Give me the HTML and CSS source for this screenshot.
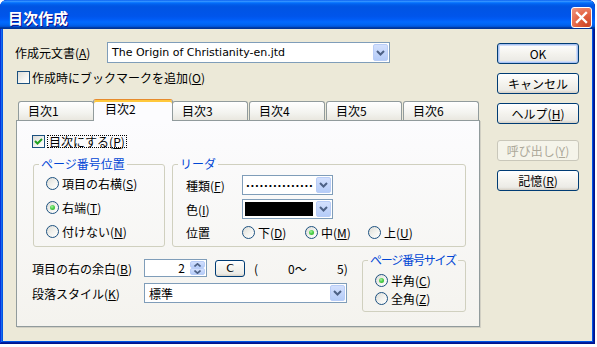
FILE: index.html
```html
<!DOCTYPE html>
<html lang="ja">
<head>
    <meta charset="UTF-8">
    <title>目次作成</title>
    <link rel="stylesheet" href="styles.css">
</head>
<body>
    <div class="window">
        <div class="titlebar">
            <span class="title">目次作成</span>
            <span class="close">
                <svg width="13" height="13" viewBox="0 0 13 13"><path d="M2 2 L11 11 M11 2 L2 11" stroke="#fff" stroke-width="2.4" stroke-linecap="square"/></svg>
            </span>
        </div>

        <div class="client">
            <div class="main">
                <div class="sourceRow">
                    <span class="sourceLabel">作成元文書(<u>A</u>)</span>
                    <div class="combo sourceCombo">
                        <span class="comboText latin">The Origin of Christianity-en.jtd</span>
                        <span class="drop"><svg width="9" height="6" viewBox="0 0 9 6"><path d="M1 1 L4.5 4.5 L8 1" fill="none" stroke="#4D6185" stroke-width="2"/></svg></span>
                    </div>
                </div>

                <div class="checkRow">
                    <span class="check"></span>
                    <span>作成時にブックマークを追加(<u>O</u>)</span>
                </div>

                <div class="tabs">
                    <div class="tab">目次1</div>
                    <div class="tab active">目次2</div>
                    <div class="tab">目次3</div>
                    <div class="tab">目次4</div>
                    <div class="tab">目次5</div>
                    <div class="tab">目次6</div>
                </div>

                <div class="panel">
                    <div class="checkRow inPanel">
                        <span class="check checked">
                            <svg width="11" height="11" viewBox="0 0 11 11"><path d="M2 5 L4.5 7.5 L9 3" fill="none" stroke="#21A121" stroke-width="2"/></svg>
                        </span>
                        <span class="focus">目次にする(<u>P</u>)</span>
                    </div>

                    <div class="groups">
                        <fieldset class="group posGroup">
                            <legend>ページ番号位置</legend>
                            <div class="opt"><span class="radio"></span><span>項目の右横(<u>S</u>)</span></div>
                            <div class="opt"><span class="radio on"></span><span>右端(<u>T</u>)</span></div>
                            <div class="opt"><span class="radio"></span><span>付けない(<u>N</u>)</span></div>
                        </fieldset>

                        <fieldset class="group leaderGroup">
                            <legend>リーダ</legend>
                            <span class="cell">種類(<u>F</u>)</span>
                            <div class="combo smallCombo">
                                <span class="comboText dots">...............</span>
                                <span class="drop"><svg width="9" height="6" viewBox="0 0 9 6"><path d="M1 1 L4.5 4.5 L8 1" fill="none" stroke="#4D6185" stroke-width="2"/></svg></span>
                            </div>
                            <span class="cell">色(<u>I</u>)</span>
                            <div class="combo smallCombo">
                                <span class="swatch"></span>
                                <span class="drop"><svg width="9" height="6" viewBox="0 0 9 6"><path d="M1 1 L4.5 4.5 L8 1" fill="none" stroke="#4D6185" stroke-width="2"/></svg></span>
                            </div>
                            <span class="cell">位置</span>
                            <div class="inlineOpts">
                                <span class="opt inline"><span class="radio"></span><span>下(<u>D</u>)</span></span>
                                <span class="opt inline"><span class="radio on"></span><span>中(<u>M</u>)</span></span>
                                <span class="opt inline"><span class="radio"></span><span>上(<u>U</u>)</span></span>
                            </div>
                        </fieldset>
                    </div>

                    <div class="bottomRow">
                        <div class="fields">
                            <div class="marginRow">
                                <span class="fieldLabel">項目の右の余白(<u>B</u>)</span>
                                <div class="spin">
                                    <span class="spinValue">2</span>
                                    <span class="spinBtns">
                                        <span class="spinBtn"><svg width="7" height="4" viewBox="0 0 7 4"><path d="M0.5 3.5 L3.5 0.8 L6.5 3.5" fill="none" stroke="#4D6185" stroke-width="1.6"/></svg></span>
                                        <span class="spinBtn"><svg width="7" height="4" viewBox="0 0 7 4"><path d="M0.5 0.5 L3.5 3.2 L6.5 0.5" fill="none" stroke="#4D6185" stroke-width="1.6"/></svg></span>
                                    </span>
                                </div>
                                <span class="btn cBtn">C</span>
                                <span class="rangeOpen">(</span>
                                <span class="rangeMin">0～</span>
                                <span>5)</span>
                            </div>
                            <div class="styleRow">
                                <span class="fieldLabel">段落スタイル(<u>K</u>)</span>
                                <div class="combo styleCombo">
                                    <span class="comboText">標準</span>
                                    <span class="drop"><svg width="9" height="6" viewBox="0 0 9 6"><path d="M1 1 L4.5 4.5 L8 1" fill="none" stroke="#4D6185" stroke-width="2"/></svg></span>
                                </div>
                            </div>
                        </div>

                        <fieldset class="group sizeGroup">
                            <legend>ページ番号サイズ</legend>
                            <div class="opt short"><span class="radio on"></span><span>半角(<u>C</u>)</span></div>
                            <div class="opt short"><span class="radio"></span><span>全角(<u>Z</u>)</span></div>
                        </fieldset>
                    </div>
                </div>
            </div>

            <div class="buttons">
                <span class="btn default">OK</span>
                <span class="btn">キャンセル</span>
                <span class="btn"><span>ヘルプ(<u>H</u>)</span></span>
                <span class="btn disabled gapTop"><span>呼び出し(<u>Y</u>)</span></span>
                <span class="btn"><span>記憶(<u>R</u>)</span></span>
            </div>
        </div>
    </div>
</body>
</html>
```

FILE: styles.css
```css
body{
    margin: 0;
    background-color: #fff;
    font-family: "Noto Sans CJK JP", sans-serif;
    font-size: 12px;
    color: #000;
}

u{
    text-decoration-thickness: 1px;
    text-underline-offset: 1px;
}

.latin{
    font-family: "DejaVu Sans", sans-serif;
    font-size: 11px;
}

.window{
    width: 595px;
    height: 344px;
    box-sizing: border-box;
    padding: 0 3px 3px;
    display: flex;
    flex-direction: column;
    background-color: #0054E3;
    border-radius: 7px 7px 0 0;
    box-shadow: inset -1px -1px #00138C, inset 1px 1px #0831D9, inset -2px -2px #001EA0, inset 2px 2px #166AEE;
}

.titlebar{
    height: 29px;
    box-sizing: border-box;
    margin: 0 -3px;
    padding: 5px 3px 0 8px;
    display: flex;
    align-items: center;
    justify-content: space-between;
    border-radius: 7px 7px 0 0;
    background: linear-gradient(to bottom, #0058EE 0%, #3A93FF 4%, #288EFF 6%, #127DFF 8%, #036FFC 10%, #0262EE 14%, #0057E5 20%, #0054E3 24%, #0055EB 56%, #005BF5 66%, #026AFE 76%, #0062EF 86%, #0052D6 92%, #0040AB 94%, #003092 100%);
}

.title{
    color: #fff;
    font-weight: bold;
    font-size: 15px;
    text-shadow: 1px 1px #0F1089;
}

.close{
    width: 21px;
    height: 21px;
    box-sizing: border-box;
    display: flex;
    align-items: center;
    justify-content: center;
    border: 1px solid #fff;
    border-radius: 3px;
    background: radial-gradient(circle at 80% 90%, #CC4628 0%, #E3603F 45%, #F09A84 100%);
}

.client{
    flex: 1;
    display: flex;
    background-color: #ECE9D8;
}

.main{
    width: 477px;
    box-sizing: border-box;
    padding-left: 12px;
}

.sourceRow{
    margin-top: 13px;
    height: 21px;
    display: flex;
    align-items: center;
}

.sourceLabel{
    width: 92px;
}

.combo{
    display: flex;
    box-sizing: border-box;
    border: 1px solid #7F9DB9;
    background-color: #fff;
    padding: 1px;
}

.comboText{
    flex: 1;
    padding-left: 3px;
    display: flex;
    align-items: center;
    white-space: nowrap;
    overflow: hidden;
}

.drop{
    width: 15px;
    display: flex;
    align-items: center;
    justify-content: center;
    box-sizing: border-box;
    border: 1px solid #B9CDF7;
    border-radius: 2px;
    background: linear-gradient(to bottom, #D3E0FD, #B5CCF8);
}

.sourceCombo{
    width: 283px;
    height: 21px;
}

.checkRow{
    margin-top: 8px;
    height: 13px;
    display: flex;
    align-items: center;
    gap: 2px;
    padding-left: 2px;
    line-height: 13px;
}

.check{
    width: 13px;
    height: 13px;
    box-sizing: border-box;
    display: flex;
    align-items: center;
    justify-content: center;
    border: 1px solid #1C5180;
    background: linear-gradient(135deg, #DCDCD7 0%, #F5F5F2 60%, #fff 100%);
}

.tabs{
    margin-top: 15px;
    height: 21px;
    padding-left: 3px;
    display: flex;
    align-items: flex-end;
    gap: 1px;
    position: relative;
    z-index: 1;
}

.tab{
    width: 76px;
    height: 19px;
    box-sizing: border-box;
    padding-left: 9px;
    line-height: 18px;
    border: 1px solid #919B9C;
    border-bottom: none;
    border-radius: 3px 3px 0 0;
    background: linear-gradient(to bottom, #FFFFFF, #F3F3EF 60%, #E9E7DF);
}

.tab.active{
    width: 80px;
    height: 22px;
    margin: 0 -2px -1px;
    padding-left: 11px;
    line-height: 17px;
    border-top: 1px solid #E68B2C;
    box-shadow: inset 0 2px #FFC83C;
    background: #FCFCFE;
}

.panel{
    margin-left: 1px;
    width: 464px;
    height: 207px;
    box-sizing: border-box;
    padding: 14px 13px 0 15px;
    border: 1px solid #919B9C;
    background: linear-gradient(to bottom, #FCFCFE, #F4F3EE);
    box-shadow: 1px 1px 0 #D2D0C4;
}

.checkRow.inPanel{
    margin-top: 0;
    padding-left: 0;
}

.focus{
    border: 1px dotted #000;
    padding: 0 1px;
    line-height: 11px;
}

.groups{
    margin-top: 9px;
    margin-left: 1px;
    display: flex;
    gap: 7px;
}

.group{
    margin: 0;
    min-width: 0;
    box-sizing: border-box;
    border: 1px solid #D0D0BF;
    border-radius: 3px;
    padding: 0 0 3px 12px;
}

.group legend{
    color: #0046D5;
    padding: 0 2px;
    line-height: 14px;
    margin-left: -7px;
    white-space: nowrap;
}

.posGroup{
    width: 132px;
}

.opt{
    height: 24px;
    display: flex;
    align-items: center;
    gap: 3px;
    white-space: nowrap;
}

.radio{
    width: 13px;
    height: 13px;
    box-sizing: border-box;
    flex: none;
    display: flex;
    align-items: center;
    justify-content: center;
    border: 1px solid #1C5180;
    border-radius: 50%;
    background: linear-gradient(135deg, #DCDCD7 0%, #F3F3EF 55%, #fff 100%);
}

.radio.on::after{
    content: "";
    width: 5px;
    height: 5px;
    border-radius: 50%;
    background: radial-gradient(circle at 40% 35%, #A9EFA6 0%, #55D551 40%, #21A121 100%);
}

.leaderGroup{
    width: 294px;
    padding-left: 13px;
    padding-top: 2px;
    display: grid;
    grid-template-columns: 56px auto;
    grid-template-rows: 24px 24px 22px;
    align-items: center;
}

.leaderGroup legend{
    margin-left: -8px;
}

.smallCombo{
    width: 91px;
    height: 20px;
}

.dots{
    font-family: "DejaVu Sans", sans-serif;
    font-weight: bold;
    font-size: 10px;
    letter-spacing: 0.7px;
    padding-left: 2px;
    padding-bottom: 3px;
}

.swatch{
    flex: 1;
    margin: 1px 3px 1px 1px;
    background-color: #000;
}

.inlineOpts{
    display: flex;
    align-items: center;
}

.opt.inline{
    width: 63px;
    height: 22px;
}

.bottomRow{
    margin-top: 6px;
    display: flex;
    align-items: flex-start;
}

.fields{
    padding-top: 6px;
}

.marginRow{
    height: 18px;
    display: flex;
    align-items: center;
}

.fieldLabel{
    width: 112px;
}

.spin{
    width: 63px;
    height: 18px;
    box-sizing: border-box;
    display: flex;
    border: 1px solid #7F9DB9;
    background-color: #fff;
    padding: 1px;
}

.spinValue{
    flex: 1;
    text-align: right;
    padding-right: 5px;
    line-height: 14px;
}

.spinBtns{
    width: 15px;
    display: flex;
    flex-direction: column;
}

.spinBtn{
    flex: 1;
    display: flex;
    align-items: center;
    justify-content: center;
    border: 1px solid #B9CDF7;
    border-radius: 2px;
    background: linear-gradient(to bottom, #D3E0FD, #B5CCF8);
}

.btn{
    height: 21px;
    box-sizing: border-box;
    display: flex;
    align-items: center;
    justify-content: center;
    border: 1px solid #003C74;
    border-radius: 3px;
    background: linear-gradient(to bottom, #FFFFFF 0%, #F4F3EE 50%, #ECEBE6 85%, #D6D0C5 100%);
    white-space: nowrap;
}

.cBtn{
    width: 30px;
    height: 17px;
    margin-left: 8px;
    font-family: "DejaVu Sans", sans-serif;
    font-size: 11px;
}

.rangeOpen{
    width: 34px;
    margin-left: 9px;
}

.rangeMin{
    width: 49px;
}

.styleRow{
    margin-top: 6px;
    height: 20px;
    display: flex;
    align-items: center;
}

.styleCombo{
    width: 203px;
    height: 20px;
}

.sizeGroup{
    width: 104px;
    margin-left: auto;
    padding: 4px 0 4px 12px;
}

.sizeGroup legend{
    letter-spacing: -1.2px;
}

.opt.short{
    height: 18px;
}

.buttons{
    width: 82px;
    margin-left: 17px;
    padding-top: 14px;
    display: flex;
    flex-direction: column;
    gap: 9px;
}

.btn.default{
    box-shadow: inset 0 0 0 1px #A9C2F2, inset 0 0 0 2px #CFDDF8;
}

.btn.disabled{
    color: #ACA899;
    border-color: #C9C7BA;
    background: #F5F4EA;
}

.gapTop{
    margin-top: 7px;
}
```
